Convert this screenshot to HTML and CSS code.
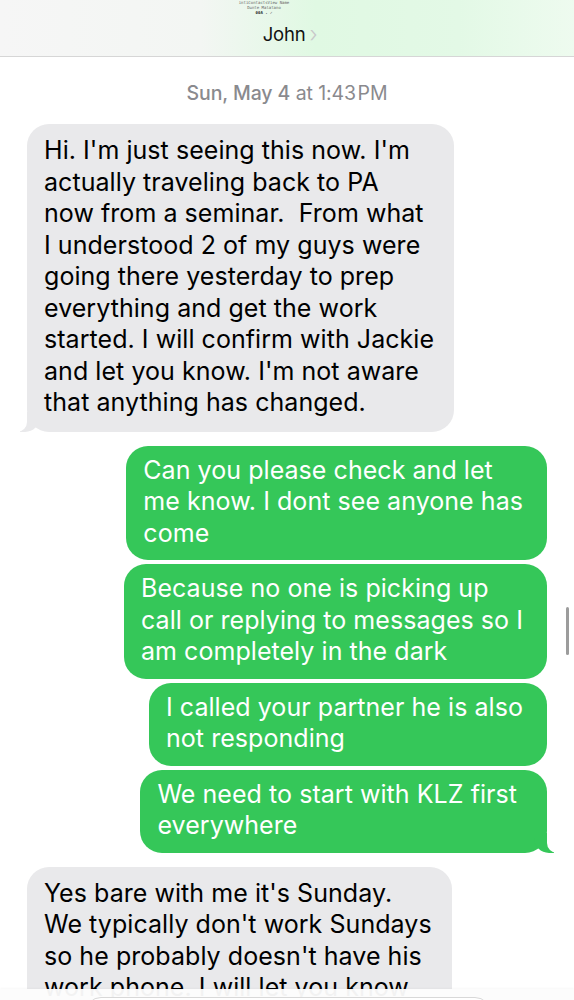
FILE: index.html
```html
<!DOCTYPE html>
<html lang="en">
<head>
    <meta charset="UTF-8">
    <meta name="viewport" content="width=device-width, initial-scale=1.0">
    <title>John</title>
    <link rel="stylesheet" href="styles.css">
</head>
<body>
    <header class="top-bar">
        <div class="avatar-text">
            <span>intiContactsView Name</span>
            <span>Dunte Malatano</span>
            <span class="avatar-bold">00A . ✓</span>
        </div>
        <div class="contact-name">John<span class="chevron">&#8250;</span></div>
    </header>

    <main class="chat">
        <div class="timestamp"><b>Sun, May 4</b> at 1:43&#8202;PM</div>

        <div class="bubble them tail">
            Hi. I'm just seeing this now. I'm<br>
            actually traveling back to PA<br>
            now from a seminar.&nbsp; From what<br>
            I understood 2 of my guys were<br>
            going there yesterday to prep<br>
            everything and get the work<br>
            started. I will confirm with Jackie<br>
            and let you know. I'm not aware<br>
            that anything has changed.
        </div>

        <div class="group">
            <div class="bubble me">
                Can you please check and let<br>
                me know. I dont see anyone has<br>
                come
            </div>
            <div class="bubble me">
                Because no one is picking up<br>
                call or replying to messages so I<br>
                am completely in the dark
            </div>
            <div class="bubble me">
                I called your partner he is also<br>
                not responding
            </div>
            <div class="bubble me tail wide">
                We need to start with KLZ first<br>
                everywhere
            </div>
        </div>

        <div class="bubble them">
            Yes bare with me it's Sunday.<br>
            We typically don't work Sundays<br>
            so he probably doesn't have his<br>
            work phone. I will let you know<br>
            as soon as I hear back.
        </div>
    </main>

    <div class="scroll-thumb"></div>

    <footer class="compose">
        <div class="compose-field"></div>
    </footer>
</body>
</html>
```

FILE: styles.css
```css
html {
    overflow: hidden;
}
body {
    margin: 0;
    padding: 0;
    height: 1000px;
    overflow: hidden;
    background: #fff;
    font-family: Inter, "Noto Sans", sans-serif;
    position: relative;
}
.top-bar {
    height: 56px;
    border-bottom: 1px solid #d6d6d6;
    background: linear-gradient(90deg, #f6f6f6 0%, #f3f6f3 35%, #e0f9e3 55%, #e3f9e6 80%, #eefbef 100%);
    display: flex;
    flex-direction: column;
    align-items: center;
}
.avatar-text {
    display: flex;
    flex-direction: column;
    align-items: center;
    font-family: "DejaVu Sans Mono", monospace;
    font-size: 4px;
    line-height: 5px;
    color: #666;
    margin-left: -46px;
}
.avatar-bold {
    font-weight: bold;
    color: #222;
}
.contact-name {
    margin-top: 8px;
    font-size: 18.5px;
    color: #111;
    letter-spacing: -0.2px;
    display: flex;
    align-items: center;
    gap: 4px;
    margin-left: 6px;
}
.chevron {
    color: #c8c8ca;
    font-size: 22px;
    font-weight: 300;
    line-height: 1;
}
.chat {
    display: flex;
    flex-direction: column;
    padding: 0 27px;
}
.timestamp {
    text-align: center;
    color: #8a8a8e;
    font-size: 19.5px;
    letter-spacing: -0.1px;
    margin: 24px 0 19px;
}
.timestamp b {
    font-weight: 500;
}
.bubble {
    position: relative;
    width: fit-content;
    font-size: 25px;
    line-height: 31.5px;
    letter-spacing: 0.05px;
    border-radius: 22px;
    padding: 11px 20px 13px 17px;
}
.them {
    background: #e9e9eb;
    color: #000;
    align-self: flex-start;
}
.me {
    background: #35c759;
    color: #fff;
    align-self: flex-end;
    padding: 9px 24px 11px 17px;
}
.me.wide {
    padding-right: 30px;
}
.group {
    display: flex;
    flex-direction: column;
    gap: 4px;
    margin: 14px 0;
}

/* bubble tails */
.tail::before,
.tail::after {
    content: "";
    position: absolute;
    bottom: 0;
    height: 20px;
}
.them.tail::before {
    left: -7px;
    width: 20px;
    background: #e9e9eb;
    border-bottom-right-radius: 15px;
}
.them.tail::after {
    left: -10px;
    width: 10px;
    background: #fff;
    border-bottom-right-radius: 10px;
}
.me.tail::before {
    right: -7px;
    width: 20px;
    background: #35c759;
    border-bottom-left-radius: 15px;
}
.me.tail::after {
    right: -10px;
    width: 10px;
    background: #fff;
    border-bottom-left-radius: 10px;
}

.scroll-thumb {
    position: absolute;
    right: 5px;
    top: 607px;
    width: 3px;
    height: 48px;
    border-radius: 2px;
    background: #9c9c9c;
}
.compose {
    position: absolute;
    left: 0;
    right: 0;
    bottom: 0;
    height: 11px;
    background: rgba(252, 252, 252, 0.96);
    box-shadow: 0 -1px 2px rgba(0, 0, 0, 0.03);
}
.compose-field {
    margin: 8px 83px 0 85px;
    height: 30px;
    border: 1px solid #d8d8d8;
    border-radius: 18px;
    background: #fff;
}
```
